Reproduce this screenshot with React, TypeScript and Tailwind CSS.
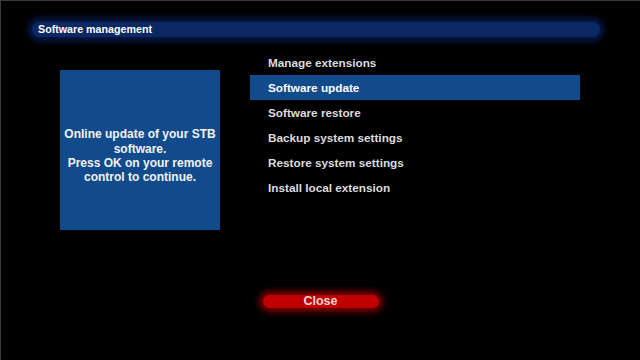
const items = [
  "Manage extensions",
  "Software update",
  "Software restore",
  "Backup system settings",
  "Restore system settings",
  "Install local extension",
];

export default function App() {
  const selected = 1;
  return (
    <div className="w-[640px] h-[360px] bg-black border-l border-t border-[#3c3c3c] overflow-hidden font-['Liberation_Sans',Arial,sans-serif] font-bold">
      {/* title bar */}
      <div className="pt-[21px]">
        <div className="ml-[31px] w-[568px] h-[15px] rounded-full bg-[#0a2864] shadow-[0_0_6px_4px_#06194a] flex items-center">
          <span className="pl-[6px] text-[10.7px] leading-[15px] text-white">Software management</span>
        </div>
      </div>

      <div className="flex mt-[13px]">
        <div className="ml-[59px] mt-[20px] w-[160px] h-[160px] shrink-0 bg-[#124b8c] flex items-center justify-center text-center pt-[12px]">
          <p className="w-full text-[12px] leading-[14.3px] text-[#f2f2f2]">
            Online update of your STB software.
            <br />
            Press OK on your remote control to continue.
          </p>
        </div>
        <div className="ml-[30px] w-[330px] flex flex-col">
          {items.map((label, i) => (
            <div
              key={label}
              className={
                "h-[25px] flex items-center pl-[18px] text-[11.75px] " +
                (i === selected ? "bg-[#124b8c] text-white" : "text-[#dcdcdc]")
              }
            >
              {label}
            </div>
          ))}
        </div>
      </div>

      <div className="flex justify-center mt-[65px]">
        <div className="w-[116px] h-[13px] rounded-full bg-[#c00000] shadow-[0_0_6px_4px_#7a0000] flex items-center justify-center text-[12.5px] text-[#f4d6d6]">
          Close
        </div>
      </div>
    </div>
  );
}
